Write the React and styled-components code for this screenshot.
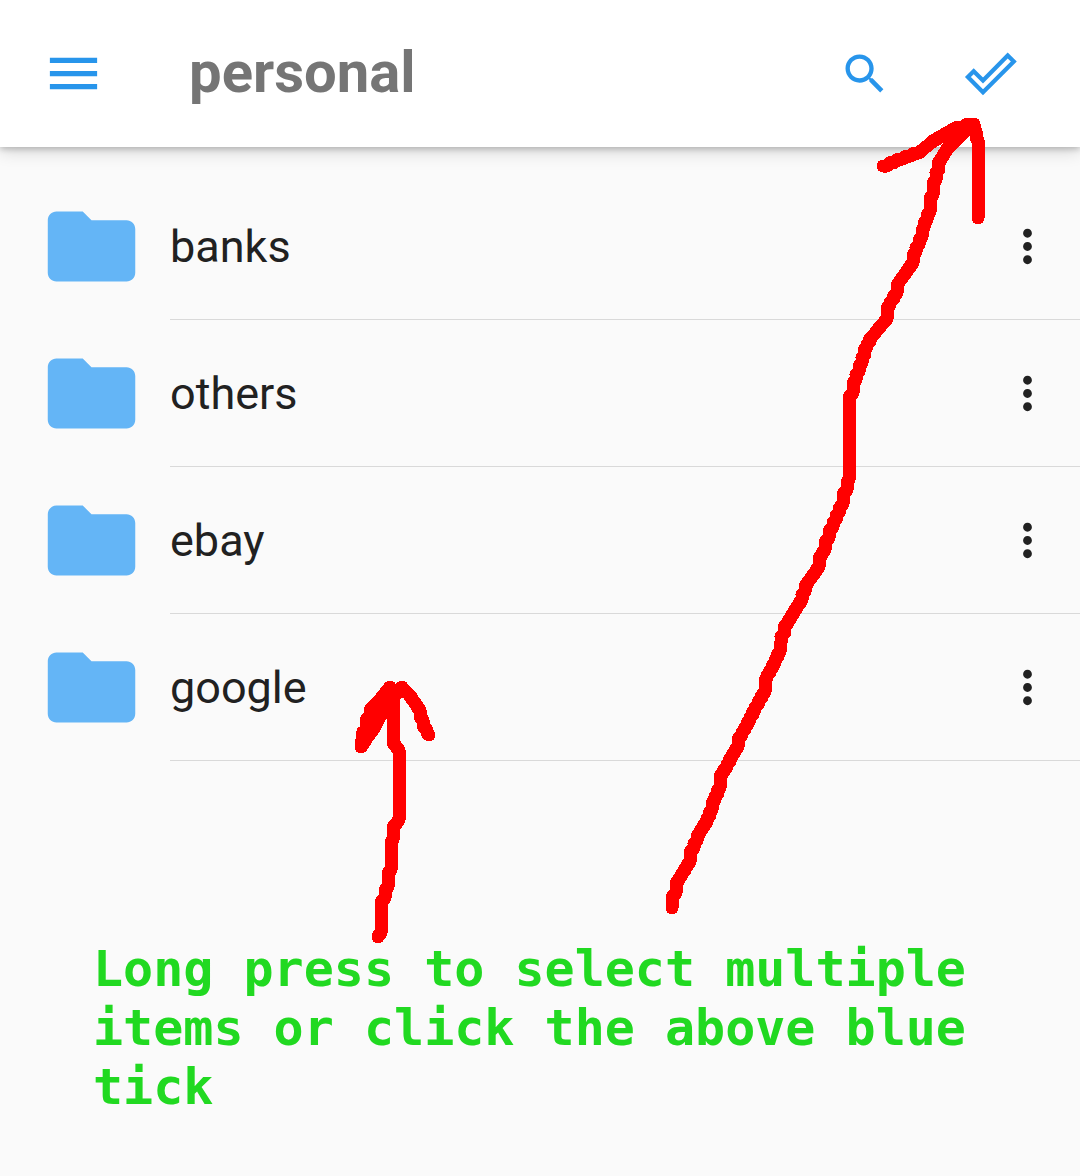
import React from "react";
import styled, { createGlobalStyle } from "styled-components";

const GlobalStyle = createGlobalStyle`
  *, *::before, *::after { box-sizing: border-box; }
  body {
    margin: 0;
    background: #fafafa;
    color: #212121;
    font-family: Roboto, "Noto Sans", sans-serif;
  }
`;

const Screen = styled.div`
  position: relative;
  min-height: 100vh;
  overflow: hidden;
`;

const AppBar = styled.header`
  display: flex;
  align-items: center;
  height: 147px;
  padding: 0 58px 0 42px;
  background: #ffffff;
  box-shadow: 0 2px 6px rgba(0, 0, 0, 0.2), 0 4px 16px rgba(0, 0, 0, 0.16);
`;

const IconButton = styled.button`
  display: flex;
  flex: none;
  padding: 0;
  border: 0;
  background: none;
  color: ${(p) => p.$color || "#2895eb"};
  cursor: pointer;
`;

const Title = styled.h1`
  flex: 1;
  margin: 0;
  padding: 0 0 4px 84px;
  color: #757575;
  font-size: 58px;
  font-weight: 700;
  line-height: 68px;
`;

const Actions = styled.div`
  display: flex;
  align-items: center;
  gap: 68px;
`;

const FolderList = styled.ul`
  margin: 0;
  padding: 26px 0 0 39px;
  list-style: none;
`;

const FolderRow = styled.li`
  display: flex;
  align-items: stretch;
  gap: 26px;
  height: 147px;
  color: #64b5f6;
  > svg { align-self: center; flex: none; }
`;

const RowBody = styled.div`
  display: flex;
  flex: 1;
  align-items: center;
  justify-content: space-between;
  padding: 1px 26px 0 0;
  border-bottom: 1px solid #d9d9d9;
`;

const FolderLink = styled.a`
  color: #212121;
  font-size: 45px;
  line-height: 53px;
  text-decoration: none;
`;

const Hint = styled.p`
  margin: 0;
  padding: 179px 93px 0;
  color: #21d921;
  font-family: "DejaVu Sans Mono", monospace;
  font-size: 50px;
  font-weight: 700;
  line-height: 59px;
`;

const Marks = styled.svg`
  position: absolute;
  top: 0;
  left: 0;
  width: 100%;
  height: auto;
  pointer-events: none;
`;

function Icon({ size, children }) {
  return (
    <svg width={size} height={size} viewBox="0 0 24 24" fill="currentColor" aria-hidden="true">
      {children}
    </svg>
  );
}

function TickIcon() {
  return (
    <svg width="63" height="63" viewBox="0 0 63 63" fill="none" stroke="currentColor" strokeWidth="4.2" aria-hidden="true">
      <path d="M8.9 35 14.7 29.2 24 38.5 48.7 13.5 54.8 19.6 24 50.2Z" />
    </svg>
  );
}

// Breaks a line into small brush steps, so that its edge looks hand-painted.
const BRUSH_STEP = 3;

function brush(line) {
  const points = line.split(" ").map((pair) => pair.split(",").map(Number));
  const out = [points[0]];
  for (let i = 1; i < points.length; i += 1) {
    const [x0, y0] = points[i - 1];
    const [x1, y1] = points[i];
    const dx = x1 - x0;
    const dy = y1 - y0;
    const minor = Math.min(Math.abs(dx), Math.abs(dy));
    const steps = Math.max(1, Math.round(minor / BRUSH_STEP));
    const steep = Math.abs(dy) > Math.abs(dx);
    for (let s = 1; s <= steps; s += 1) {
      const x = x0 + (dx * s) / steps;
      const y = y0 + (dy * s) / steps;
      const cut = minor / steps;
      if (steep) {
        out.push([x - dx / steps, y - Math.sign(dy) * cut]);
      } else {
        out.push([x - Math.sign(dx) * cut, y - dy / steps]);
      }
      out.push([x, y]);
    }
  }
  return out.map((point) => point.join(",")).join(" ");
}

function Arrows() {
  return (
    <Marks viewBox="0 0 1080 1176" aria-hidden="true">
      <g fill="none" stroke="#ff0000" strokeWidth="13" strokeLinecap="round" strokeLinejoin="round" shapeRendering="crispEdges">
        <polyline points={brush("672,908 672,903 676,893 679,880 690,862 694,848 700,833 707,822 712,810 715,800 720,788 720,778 727,767 732,757 738,747 742,735 750,720 755,710 765,692 767,678 775,663 780,652 781,643 788,623 797,608 802,600 808,583 819,567 819,560 825,550 829,538 833,527 843,504 847,490 849,480 849,407 853,393 856,380 862,363 867,347 872,337 887,319 890,305 897,293 899,283 913,263 916,252 922,237 924,228 930,212 933,195 936,180 941,160 949,147 967,129 972,124")} />
        <polyline points={brush("883,166 898,159 922,150 934,140 948,132 957,127 967,124 974,124 976,131 978,140 978,218")} />
        <polyline points={brush("378,937 381,933 381,910 385,898 388,887 391,870 393,840 397,823 399,820 399,760 396,747 393,743 393,693")} />
        <polygon fill="#ff0000" points="361,747 363,732 366,730 366,720 370,715 370,710 378,702 390,687 393,694 388,708 380,716 373,730 367,738 362,746" />
        <polyline points={brush("398,693 402,687 412,698 420,710 423,720 427,730 429,735")} />
      </g>
    </Marks>
  );
}

const folders = ["banks", "others", "ebay", "google"];

export default function App() {
  return (
    <Screen>
      <GlobalStyle />
      <AppBar>
        <IconButton type="button" aria-label="Open menu">
          <Icon size={63}>
            <path d="M3 18h18v-2H3v2zm0-5h18v-2H3v2zm0-7v2h18V6H3z" />
          </Icon>
        </IconButton>
        <Title>personal</Title>
        <Actions>
          <IconButton type="button" aria-label="Search">
            <Icon size={52}>
              <path d="M15.5 14h-.79l-.28-.27C15.41 12.59 16 11.11 16 9.5 16 5.91 13.09 3 9.5 3S3 5.91 3 9.5 5.91 16 9.5 16c1.61 0 3.09-.59 4.23-1.57l.27.28v.79l5 4.99L20.49 19l-4.99-5zm-6 0C7.01 14 5 11.99 5 9.5S7.01 5 9.5 5 14 7.01 14 9.5 11.99 14 9.5 14z" />
            </Icon>
          </IconButton>
          <IconButton type="button" aria-label="Select items">
            <TickIcon />
          </IconButton>
        </Actions>
      </AppBar>
      <main>
        <FolderList>
          {folders.map((name) => (
            <FolderRow key={name}>
              <Icon size={105}>
                <path d="M10 4H4c-1.1 0-1.99.9-1.99 2L2 18c0 1.1.9 2 2 2h16c1.1 0 2-.9 2-2V8c0-1.1-.9-2-2-2h-8l-2-2z" />
              </Icon>
              <RowBody>
                <FolderLink href={`#${name}`}>{name}</FolderLink>
                <IconButton type="button" $color="#212121" aria-label={`Options for ${name}`}>
                  <Icon size={53}>
                    <path d="M12 8c1.1 0 2-.9 2-2s-.9-2-2-2-2 .9-2 2 .9 2 2 2zm0 2c-1.1 0-2 .9-2 2s.9 2 2 2 2-.9 2-2-.9-2-2-2zm0 6c-1.1 0-2 .9-2 2s.9 2 2 2 2-.9 2-2-.9-2-2-2z" />
                  </Icon>
                </IconButton>
              </RowBody>
            </FolderRow>
          ))}
        </FolderList>
        <Hint>Long press to select multiple items or click the above blue tick</Hint>
      </main>
      <Arrows />
    </Screen>
  );
}
